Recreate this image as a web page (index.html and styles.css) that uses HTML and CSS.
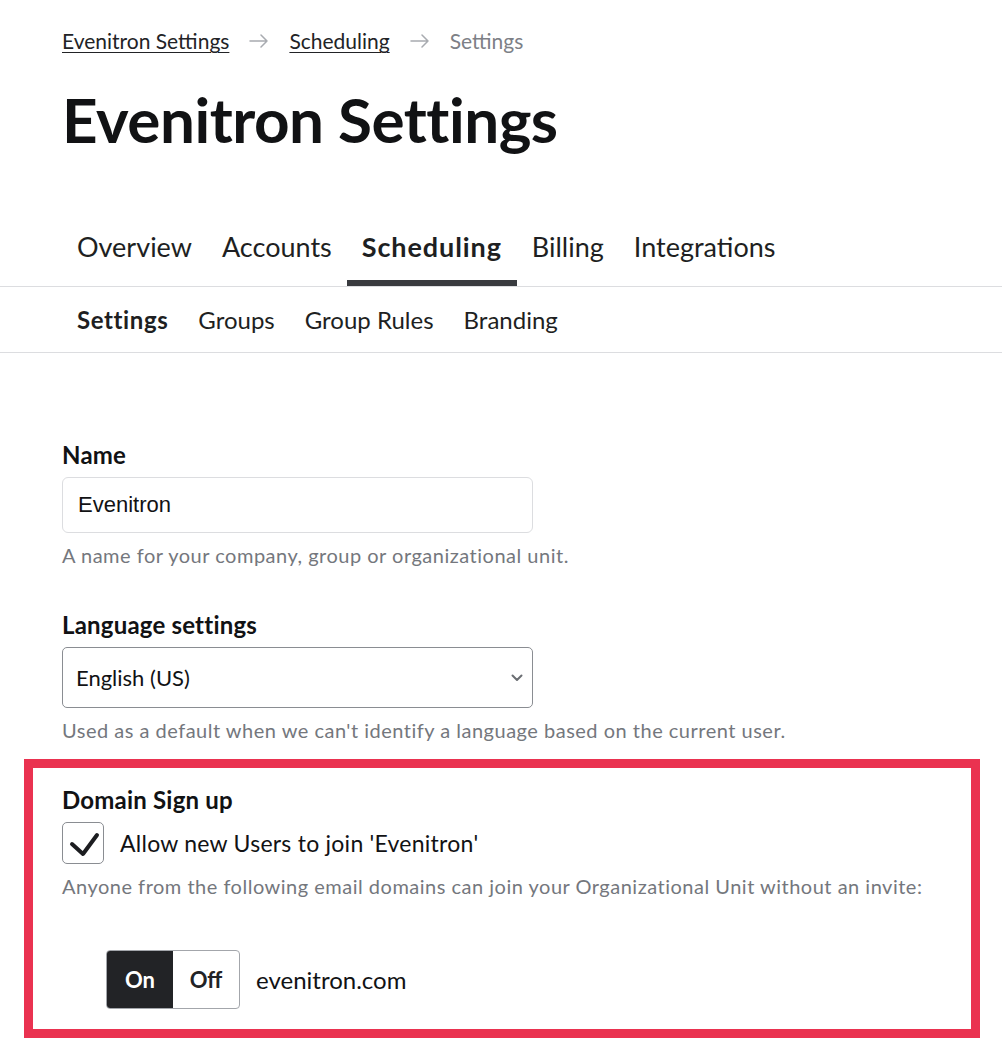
FILE: index.html
```html
<!DOCTYPE html>
<html lang="en">
<head>
    <meta charset="UTF-8">
    <meta name="viewport" content="width=device-width, initial-scale=1.0">
    <title>Evenitron Settings</title>
    <link rel="stylesheet" href="styles.css">
</head>
<body>

    <div class="page-head">
        <nav class="breadcrumb">
            <a href="#">Evenitron Settings</a>
            <svg class="crumb-arrow" width="20" height="14" viewBox="0 0 20 14"><path d="M1 7h17M12 1l6 6-6 6" fill="none" stroke="#a8abb0" stroke-width="1.5" stroke-linecap="round" stroke-linejoin="round"/></svg>
            <a href="#">Scheduling</a>
            <svg class="crumb-arrow" width="20" height="14" viewBox="0 0 20 14"><path d="M1 7h17M12 1l6 6-6 6" fill="none" stroke="#a8abb0" stroke-width="1.5" stroke-linecap="round" stroke-linejoin="round"/></svg>
            <span class="current">Settings</span>
        </nav>
        <h1>Evenitron Settings</h1>
    </div>

    <div class="tabs">
        <a href="#" class="tab">Overview</a>
        <a href="#" class="tab">Accounts</a>
        <a href="#" class="tab active">Scheduling</a>
        <a href="#" class="tab">Billing</a>
        <a href="#" class="tab">Integrations</a>
    </div>

    <div class="subtabs">
        <a href="#" class="subtab active">Settings</a>
        <a href="#" class="subtab">Groups</a>
        <a href="#" class="subtab">Group Rules</a>
        <a href="#" class="subtab">Branding</a>
    </div>

    <div class="form">
        <label class="field-label" for="name">Name</label>
        <input type="text" id="name" class="text-input" value="Evenitron">
        <div class="help">A name for your company, group or organizational unit.</div>

        <label class="field-label second" for="lang">Language settings</label>
        <div class="select-wrap">
            <select id="lang" class="select-input">
                <option>English (US)</option>
            </select>
            <svg class="chevron" width="12" height="8" viewBox="0 0 12 8"><path d="M1.5 1.5l4.5 4.5 4.5-4.5" fill="none" stroke="#6b6e73" stroke-width="2" stroke-linecap="round" stroke-linejoin="round"/></svg>
        </div>
        <div class="help">Used as a default when we can't identify a language based on the current user.</div>

        <div class="highlight">
            <div class="field-label">Domain Sign up</div>
            <label class="check-row">
                <span class="checkbox">
                    <svg width="42" height="42" viewBox="0 0 42 42"><path d="M10 22l11 10 14-19" fill="none" stroke="#1c1d20" stroke-width="4" stroke-linecap="round" stroke-linejoin="round"/></svg>
                </span>
                Allow new Users to join 'Evenitron'
            </label>
            <div class="help">Anyone from the following email domains can join your Organizational Unit without an invite:</div>

            <div class="domain-row">
                <div class="toggle">
                    <span class="toggle-on">On</span>
                    <span class="toggle-off">Off</span>
                </div>
                <span class="domain">evenitron.com</span>
            </div>
        </div>
    </div>

</body>
</html>
```

FILE: styles.css
```css
body {
    margin: 0;
    font-family: Lato, "Open Sans", sans-serif;
    color: #111214;
    background-color: #fff;
}
a {
    color: inherit;
    text-decoration: none;
}
.page-head {
    padding: 29px 62px 0;
}
.breadcrumb {
    display: flex;
    align-items: center;
    gap: 20px;
    font-size: 21px;
    line-height: 24px;
}
.breadcrumb a {
    color: #222326;
    text-decoration: underline;
    text-underline-offset: 3px;
    text-decoration-thickness: 1px;
}
.breadcrumb .current {
    color: #7d8086;
}
.crumb-arrow {
    display: block;
}
h1 {
    margin: 36px 0 0;
    font-size: 62px;
    line-height: 60px;
    font-weight: 700;
    letter-spacing: -0.5px;
}
.tabs {
    display: flex;
    padding: 82px 62px 0;
    border-bottom: 1px solid #dcdde0;
}
.tab {
    padding: 0 15px 17px;
    font-size: 27px;
    line-height: 32px;
    border-bottom: 6px solid transparent;
    color: #1e1f22;
}
.tab.active {
    font-weight: 700;
    letter-spacing: 0.9px;
    border-bottom-color: #393b3f;
}
.subtabs {
    display: flex;
    padding: 18px 62px 17px;
    border-bottom: 1px solid #dcdde0;
}
.subtab {
    padding: 0 15px;
    font-size: 24px;
    line-height: 30px;
    color: #1e1f22;
}
.subtab.active {
    font-weight: 700;
    letter-spacing: 0.6px;
}
.form {
    padding: 88px 62px 0;
}
.field-label {
    display: block;
    font-size: 24px;
    line-height: 28px;
    font-weight: 700;
    letter-spacing: 0.2px;
    margin-bottom: 8px;
}
.field-label.second {
    margin-top: 44px;
}
.text-input {
    display: block;
    box-sizing: border-box;
    width: 471px;
    height: 56px;
    padding: 0 15px;
    border: 1px solid #dcdde0;
    border-radius: 6px;
    font-family: "Liberation Sans", Arial, sans-serif;
    font-size: 22px;
    color: #111214;
}
.select-wrap {
    position: relative;
    width: 471px;
}
.select-input {
    display: block;
    box-sizing: border-box;
    width: 471px;
    height: 61px;
    padding: 0 40px 0 13px;
    border: 1px solid #8a8d92;
    border-radius: 5px;
    background-color: #fff;
    font-family: Lato, sans-serif;
    font-size: 22px;
    color: #111214;
    appearance: none;
}
.chevron {
    position: absolute;
    right: 10px;
    top: 27px;
}
.help {
    margin-top: 10px;
    font-size: 20px;
    line-height: 24px;
    letter-spacing: 0.5px;
    color: #74777d;
}
.highlight {
    margin: 17px -40px 0 -38px;
    padding: 18px 0 20px 29px;
    border: 9px solid #ea3250;
}
.check-row {
    display: flex;
    align-items: center;
    gap: 16px;
    font-size: 23px;
    line-height: 28px;
    letter-spacing: 0.25px;
}
.checkbox {
    display: block;
    box-sizing: border-box;
    width: 42px;
    height: 42px;
    border: 1px solid #8a8d92;
    border-radius: 5px;
    position: relative;
}
.checkbox svg {
    position: absolute;
    left: -1px;
    top: -1px;
}
.domain-row {
    display: flex;
    align-items: center;
    gap: 16px;
    margin: 52px 0 0 44px;
}
.toggle {
    display: flex;
    height: 59px;
    border: 1px solid #a3a6ab;
    border-radius: 4px;
    overflow: hidden;
    box-sizing: border-box;
}
.toggle span {
    display: flex;
    align-items: center;
    justify-content: center;
    width: 66px;
    font-size: 22px;
    font-weight: 700;
}
.toggle-on {
    background-color: #222326;
    color: #fff;
}
.toggle-off {
    color: #222326;
}
.domain {
    font-size: 24px;
}
```
